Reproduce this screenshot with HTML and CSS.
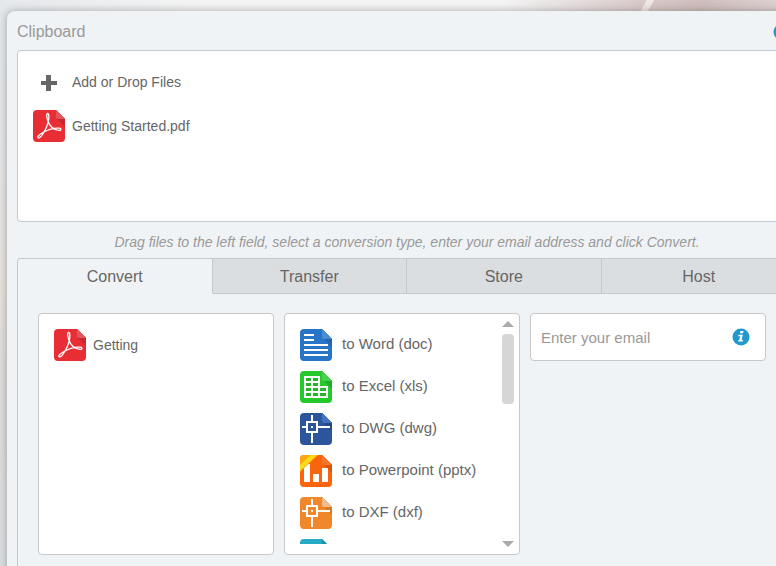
FILE: index.html
```html
<!DOCTYPE html>
<html lang="en">
<head>
  <meta charset="UTF-8">
  <meta name="viewport" content="width=device-width, initial-scale=1.0">
  <title>Convert files</title>
  <link rel="stylesheet" href="styles.css">
</head>
<body>
  <svg class="symbols" aria-hidden="true">
    <symbol id="pdf" viewBox="0 0 32 32">
      <path fill="#e92d35" d="M4 0h19l9 9v19a4 4 0 0 1-4 4H4a4 4 0 0 1-4-4V4a4 4 0 0 1 4-4z"/>
      <path fill="#c9262e" d="M23 0l9 9v8l-9-9z"/>
      <path fill="#e2565c" d="M23 0l9 9h-7a2 2 0 0 1-2-2z"/>
      <path fill="none" stroke="#fff" stroke-width="1.3" stroke-linejoin="round" d="M14.500 3.500c-1.300.3-.9 3.500.2 7 1.800 5.500 6 9.500 11.500 9.900 2.400 0 2.300-1.900.2-2.200-4.600-.6-11 1.300-15 3.600-3 1.600-6.800 3.800-6.600 5.400.4 1.400 2.600.2 4-1.800 2.700-3.700 6-10 6.900-16 .4-3 .2-6.200-1.200-5.900z"/>
    </symbol>
    <symbol id="info" viewBox="0 0 18 18">
      <circle cx="9" cy="9" r="8.500" fill="#219acb"/>
      <path fill="#fff" d="M8.500 3h3l-.5 2.200H8zM6.500 6.700h4.300l-1.200 5.200h1.600l-.4 1.600H6.200l.3-1.600h.9l.8-3.600H6.200z"/>
    </symbol>
  </svg>

  <main class="panel">
    <header class="panel-head">
      <h1>Clipboard</h1>
      <button class="info-btn" type="button" aria-label="About the clipboard"><svg><use href="#info"/></svg></button>
    </header>

    <section class="box clipboard">
      <button class="file" type="button">
        <svg class="icon" viewBox="0 0 32 32"><path fill="#666" d="M13 9h5v6h6v4h-6v6h-5v-6H8v-4h5z"/></svg>
        <span>Add or Drop Files</span>
      </button>
      <div class="file">
        <svg class="icon"><use href="#pdf"/></svg>
        <span>Getting Started.pdf</span>
      </div>
    </section>

    <p class="hint">Drag files to the left field, select a conversion type, enter your email address and click Convert.</p>

    <nav class="tabs">
      <button class="tab active" type="button">Convert</button>
      <button class="tab" type="button">Transfer</button>
      <button class="tab" type="button">Store</button>
      <button class="tab" type="button">Host</button>
    </nav>

    <section class="tab-body">
      <div class="box files">
        <div class="file">
          <svg class="icon"><use href="#pdf"/></svg>
          <span>Getting</span>
        </div>
      </div>

      <div class="box formats">
        <div class="format-list">
          <button class="format" type="button">
            <svg class="icon" viewBox="0 0 32 32">
              <path fill="#2874c6" d="M4 0h18l10 10v18a4 4 0 0 1-4 4H4a4 4 0 0 1-4-4V4a4 4 0 0 1 4-4z"/>
              <path fill="#2265ae" d="M22 0l10 10v8L22 8z"/>
              <path fill="#4a8dd6" d="M22 0l10 10h-8a2 2 0 0 1-2-2z"/>
              <path stroke="#fff" stroke-width="2" d="M4 6h10M4 11h10M4 16h24M4 21h24M4 26h24"/>
            </svg>
            <span>to Word (doc)</span>
          </button>
          <button class="format" type="button">
            <svg class="icon" viewBox="0 0 32 32">
              <path fill="#25c92b" d="M4 0h18l10 10v18a4 4 0 0 1-4 4H4a4 4 0 0 1-4-4V4a4 4 0 0 1 4-4z"/>
              <path fill="#1fae25" d="M22 0l10 10v8L22 8z"/>
              <path fill="#45d34a" d="M22 0l10 10h-8a2 2 0 0 1-2-2z"/>
              <path fill="#fff" d="M4 5h16v10h8v12H4z"/>
              <path stroke="#25b52b" stroke-width="3" d="M6 8.500h5M13 8.500h5M6 13.500h5M13 13.500h5M6 18.500h5M13 18.500h5M20 18.500h6M6 23.500h5M13 23.500h5M20 23.500h6"/>
            </svg>
            <span>to Excel (xls)</span>
          </button>
          <button class="format" type="button">
            <svg class="icon" viewBox="0 0 32 32">
              <path fill="#2d559b" d="M4 0h18l10 10v18a4 4 0 0 1-4 4H4a4 4 0 0 1-4-4V4a4 4 0 0 1 4-4z"/>
              <path fill="#264885" d="M22 0l10 10v8L22 8z"/>
              <path fill="#4272c0" d="M22 0l10 10h-8a2 2 0 0 1-2-2z"/>
              <path fill="none" stroke="#fff" stroke-width="2" d="M7 9h10v10H7zM12 2v7M12 19v11M2 14h5M17 14h13"/>
              <path fill="#fff" d="M11 13h2v2h-2z"/>
            </svg>
            <span>to DWG (dwg)</span>
          </button>
          <button class="format" type="button">
            <svg class="icon" viewBox="0 0 32 32">
              <path fill="#f8650c" d="M4 0h18l10 10v18a4 4 0 0 1-4 4H4a4 4 0 0 1-4-4V4a4 4 0 0 1 4-4z"/>
              <path fill="#dd5308" d="M22 0l10 10v8L22 8z"/>
              <path fill="#f4762c" d="M22 0l10 10h-8a2 2 0 0 1-2-2z"/>
              <path fill="#fff" d="M4 9h6v18H4zM13 19h6v8h-6zM22 13h6v14h-6z"/>
              <path fill="#fda90c" d="M4 0h14L0 17V4a4 4 0 0 1 4-4z"/>
              <path fill="#f8dc1c" d="M11 0h6L0 16v-6z"/>
            </svg>
            <span>to Powerpoint (pptx)</span>
          </button>
          <button class="format" type="button">
            <svg class="icon" viewBox="0 0 32 32">
              <path fill="#f0872a" d="M4 0h18l10 10v18a4 4 0 0 1-4 4H4a4 4 0 0 1-4-4V4a4 4 0 0 1 4-4z"/>
              <path fill="#d97722" d="M22 0l10 10v8L22 8z"/>
              <path fill="#f3bd8b" d="M22 0l10 10h-8a2 2 0 0 1-2-2z"/>
              <path fill="none" stroke="#fff" stroke-width="2" d="M7 9h10v10H7zM12 2v7M12 19v11M2 14h5M17 14h13"/>
              <path fill="#fff" d="M11 13h2v2h-2z"/>
            </svg>
            <span>to DXF (dxf)</span>
          </button>
          <div class="format">
            <svg class="icon" viewBox="0 0 32 32">
              <path fill="#26a9c4" d="M4 0h18l10 10v18a4 4 0 0 1-4 4H4a4 4 0 0 1-4-4V4a4 4 0 0 1 4-4z"/>
              <path fill="#1c92aa" d="M22 0l10 10h-8a2 2 0 0 1-2-2z"/>
            </svg>
          </div>
        </div>
        <div class="scroll" aria-hidden="true">
          <svg class="arrow" viewBox="0 0 12 6"><path fill="#aaa" d="M0 6l6-6 6 6z"/></svg>
          <div class="thumb"></div>
          <svg class="arrow" viewBox="0 0 12 6"><path fill="#aaa" d="M0 0h12L6 6z"/></svg>
        </div>
      </div>

      <div class="box email">
        <input type="email" placeholder="Enter your email" aria-label="Enter your email">
        <button class="info-btn" type="button" aria-label="About your email"><svg><use href="#info"/></svg></button>
      </div>
    </section>
  </main>
</body>
</html>
```
FILE: styles.css
```css
* {
  margin: 0;
  padding: 0;
  box-sizing: border-box;
}

body {
  min-height: 100vh;
  padding: 11px 0 0 7px;
  overflow: hidden;
  font-family: "Liberation Sans", Arial, sans-serif;
  font-size: 14px;
  color: #666;
  background:
    linear-gradient(120deg, transparent 40%, #f0e8e4 42%, #f0e8e4 58%, transparent 60%) 630px 0 / 34px 12px no-repeat,
    linear-gradient(90deg, transparent 500px, #d9caca 640px, #cfbebd 700px, #ddd0d0) 0 0 / 100% 12px no-repeat,
    linear-gradient(90deg, #e6e9ec, #f5f5f5 220px) 0 0 / 100% 12px no-repeat,
    linear-gradient(#e4e7ea, #e4e6e8 25%, #e8e2dd 50%, #dfdddc 65%, #dcdfe2);
}

button {
  font: inherit;
  color: inherit;
  background: none;
  border: 0;
  text-align: left;
  cursor: pointer;
}

.symbols {
  display: none;
}

/* the panel runs on past the right edge of the window */
.panel {
  min-height: calc(100vh - 11px);
  margin-right: -31px;
  padding: 0 10px;
  background: #f0f3f5;
  border-radius: 8px 8px 0 0;
  box-shadow: 0 0 8px rgba(0, 0, 0, 0.3);
}

.panel-head {
  display: flex;
  align-items: center;
  justify-content: space-between;
  height: 39px;
  padding: 2px 6px 0 0;
}

.panel-head h1 {
  font-size: 16px;
  font-weight: normal;
  color: #999;
}

.info-btn,
.info-btn svg {
  display: block;
  width: 18px;
  height: 18px;
}

.box {
  background: #fff;
  border: 1px solid #c6c8ca;
  border-radius: 4px;
}

.clipboard {
  display: flex;
  flex-direction: column;
  gap: 12px;
  height: 172px;
  padding: 15px;
}

.file {
  display: flex;
  align-items: center;
  gap: 7px;
}

.icon {
  flex: none;
  width: 32px;
  height: 32px;
}

.hint {
  padding: 10px 0 6px;
  line-height: 20px;
  font-style: italic;
  text-align: center;
  color: #999;
}

.tabs {
  display: grid;
  grid-template-columns: repeat(4, 1fr);
  height: 36px;
  border: 1px solid #c6c8ca;
  border-bottom: 0;
  border-radius: 4px 4px 0 0;
}

.tab {
  padding-top: 2px;
  font-size: 16px;
  text-align: center;
  background: #dbdee0;
  border-right: 1px solid #c6c8ca;
  border-bottom: 1px solid #c6c8ca;
}

.tab.active {
  background: none;
  border-bottom-color: transparent;
}

.tab:last-child {
  border-right: 0;
}

.tab-body {
  display: grid;
  grid-template-columns: repeat(3, minmax(0, 1fr));
  gap: 10px;
  align-items: start;
  padding: 19px 30px 20px 20px;
  border: 1px solid #c6c8ca;
  border-width: 0 1px;
}

.files,
.formats {
  height: 242px;
}

.files {
  padding: 15px;
}

.formats {
  display: flex;
  justify-content: space-between;
  padding: 0 5px 0 15px;
}

.format-list {
  display: flex;
  flex-direction: column;
  gap: 10px;
  height: 230px;
  padding-top: 15px;
  overflow: hidden;
}

.format {
  display: flex;
  flex: none;
  align-items: center;
  gap: 10px;
  font-size: 15px;
}

.format span {
  padding-bottom: 3px;
}

.scroll {
  display: flex;
  flex-direction: column;
  align-items: center;
  gap: 7px;
  width: 12px;
  padding: 7px 0;
}

.arrow {
  flex: none;
  width: 12px;
  height: 6px;
}

.arrow:last-child {
  margin-top: auto;
}

.thumb {
  width: 12px;
  height: 70px;
  background: #d6d6d6;
  border-radius: 4px;
}

.email {
  display: flex;
  align-items: center;
  height: 48px;
  padding: 0 15px 0 10px;
}

.email input {
  flex: 1;
  min-width: 0;
  font: inherit;
  font-size: 15px;
  color: #666;
  background: none;
  border: 0;
}

.email input::placeholder {
  color: #999;
}
```
